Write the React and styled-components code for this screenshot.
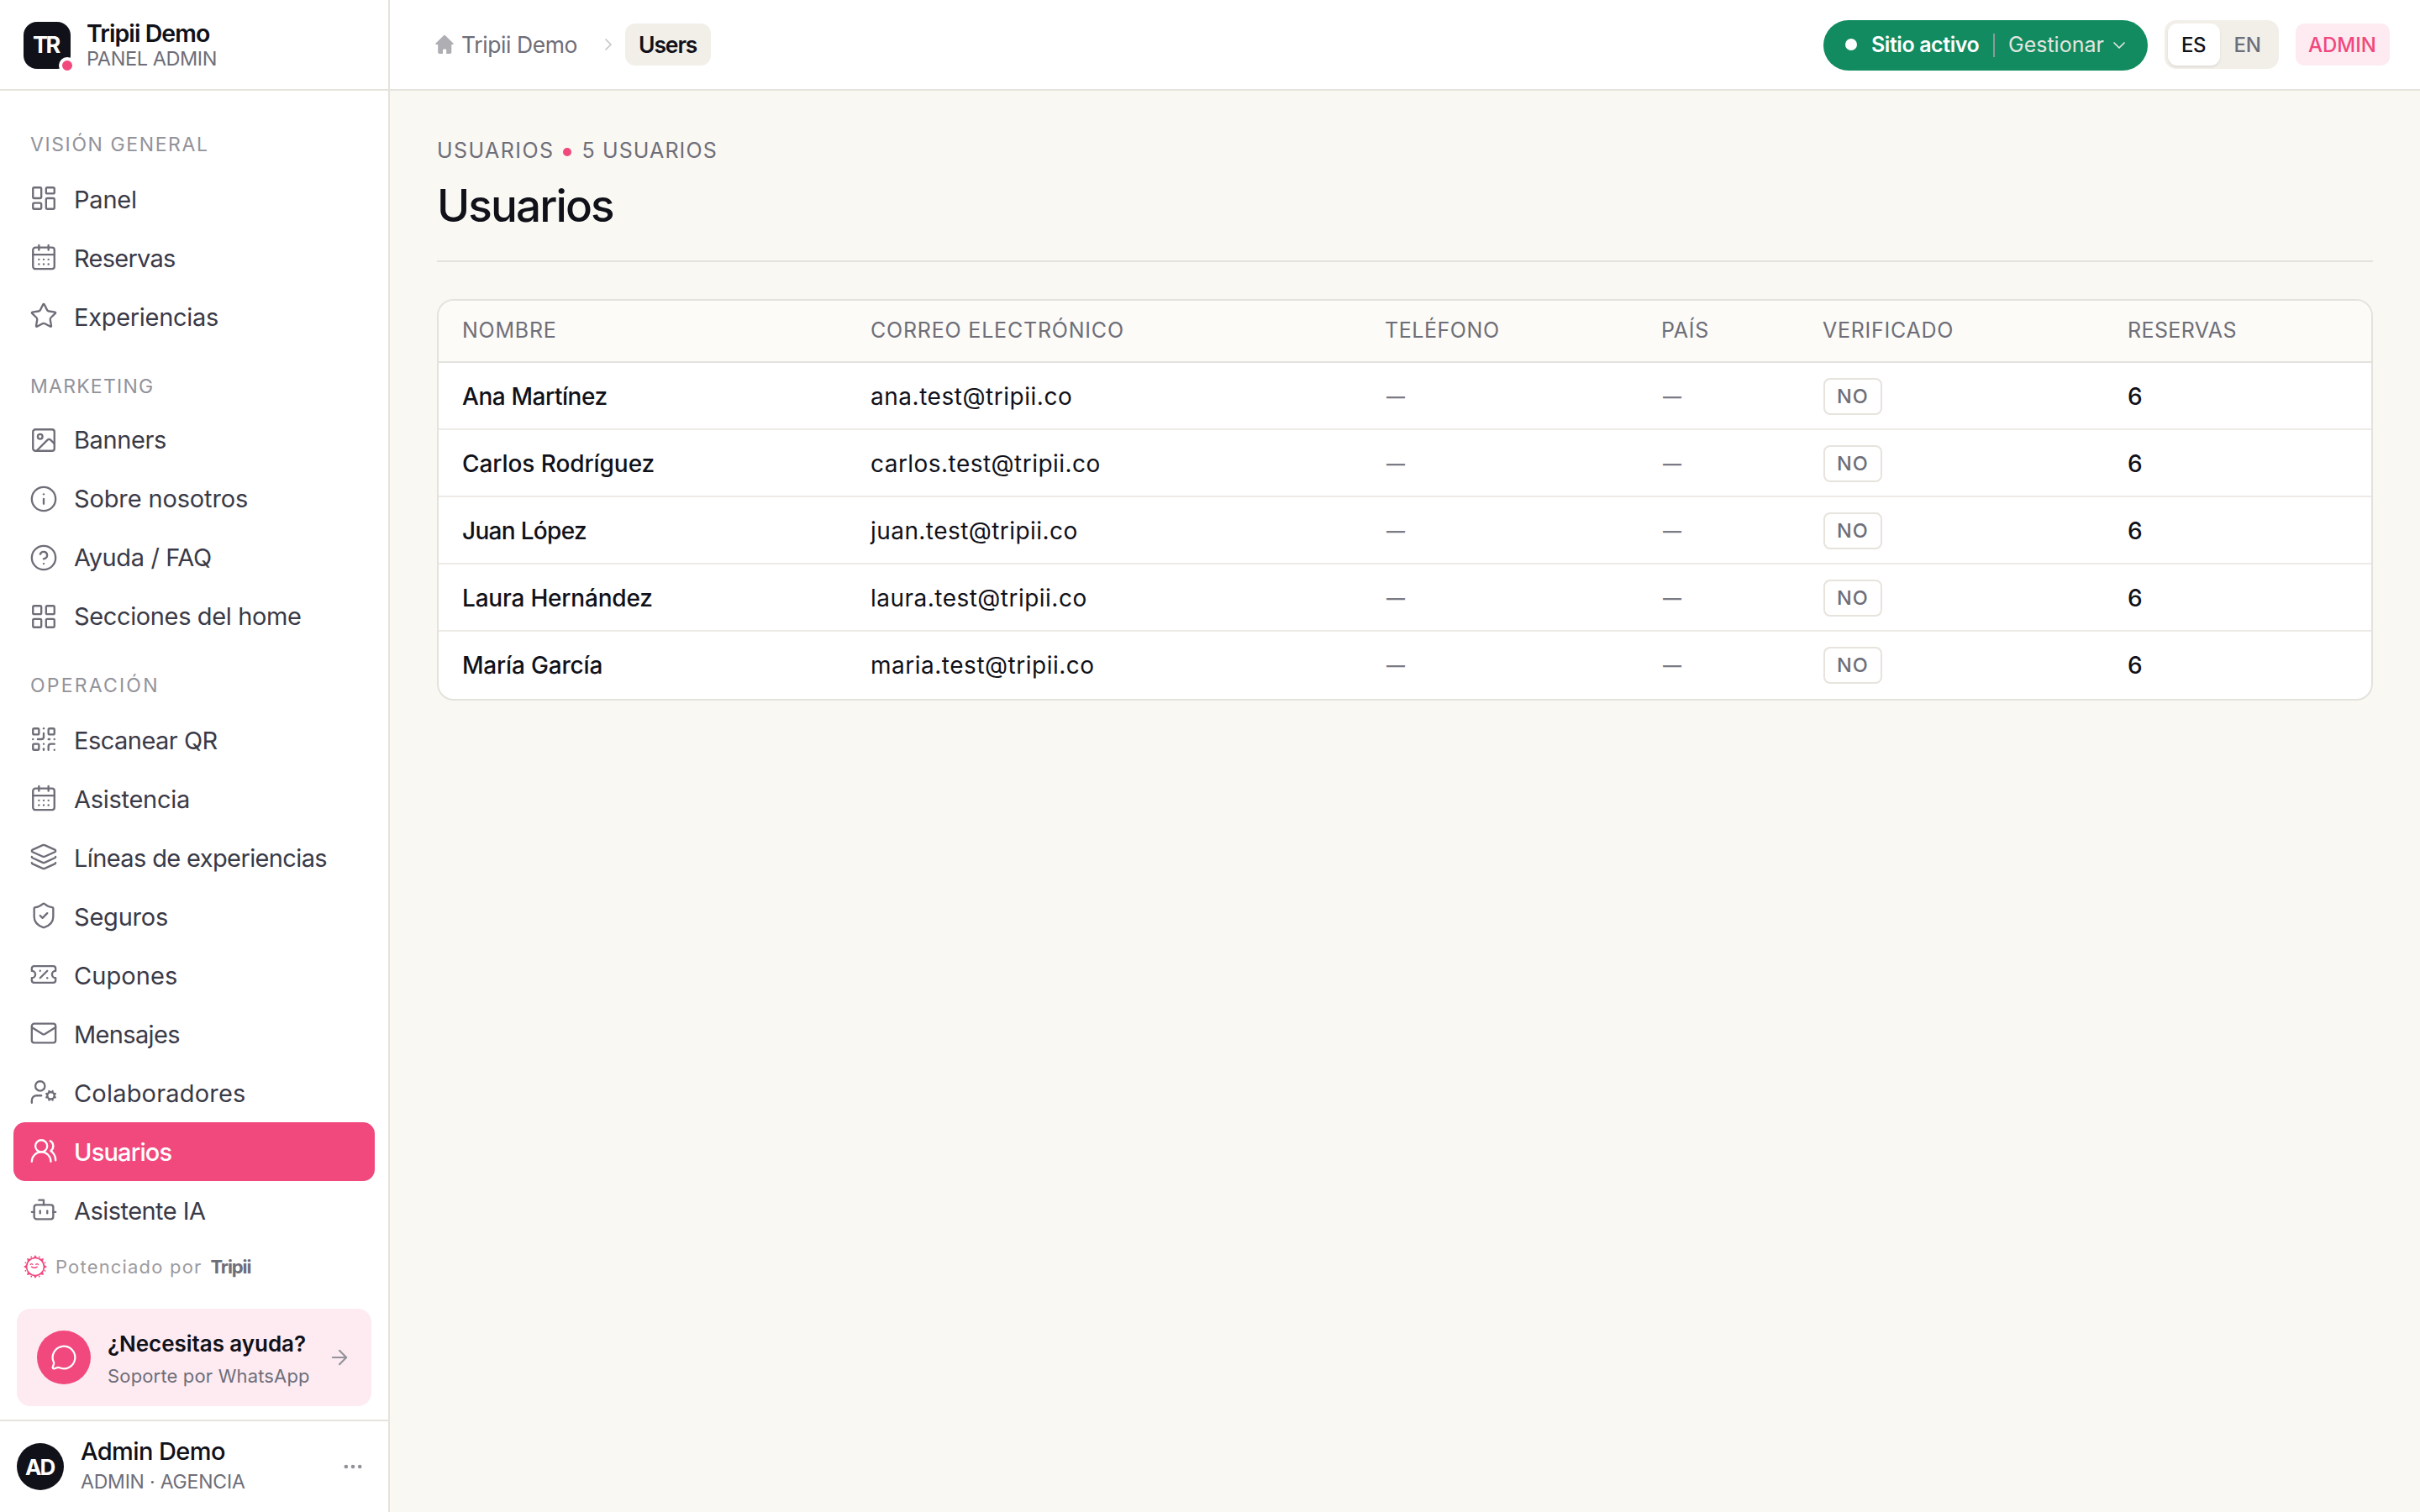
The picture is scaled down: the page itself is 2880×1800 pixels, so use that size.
import React, { useState } from "react";
import styled, { createGlobalStyle } from "styled-components";
import {
  ArrowRight,
  Bot,
  CalendarDays,
  ChevronDown,
  ChevronRight,
  CircleHelp,
  Ellipsis,
  Image,
  Info,
  Layers,
  LayoutDashboard,
  LayoutGrid,
  Mail,
  MessageCircle,
  QrCode,
  ShieldCheck,
  Star,
  TicketPercent,
  UserCog,
  UsersRound,
} from "lucide-react";

const groups = [
  {
    title: "VISIÓN GENERAL",
    track: 1.6,
    gap: 17,
    lift: 2,
    textLift: 1,
    items: [
      { label: "Panel", icon: LayoutDashboard, track: -0.21 },
      { label: "Reservas", icon: CalendarDays, track: -0.74 },
      { label: "Experiencias", icon: Star, track: -0.29 },
    ],
  },
  {
    title: "MARKETING",
    track: 1.24,
    gap: 15,
    lift: 0,
    textLift: 1,
    items: [
      { label: "Banners", icon: Image, track: -0.39 },
      { label: "Sobre nosotros", icon: Info, track: -0.14 },
      { label: "Ayuda / FAQ", icon: CircleHelp, track: -0.38 },
      { label: "Secciones del home", icon: LayoutGrid, track: -0.37 },
    ],
  },
  {
    title: "OPERACIÓN",
    track: 2.2,
    gap: 16,
    lift: 1,
    textLift: 0,
    items: [
      { label: "Escanear QR", icon: QrCode, track: -0.52 },
      { label: "Asistencia", icon: CalendarDays, track: -0.28 },
      { label: "Líneas de experiencias", icon: Layers, track: -0.62 },
      { label: "Seguros", icon: ShieldCheck, track: -0.21 },
      { label: "Cupones", icon: TicketPercent, track: 0.08 },
      { label: "Mensajes", icon: Mail, track: -0.66 },
      { label: "Colaboradores", icon: UserCog, track: 0.19 },
      { label: "Usuarios", icon: UsersRound, track: -0.84 },
      { label: "Asistente IA", icon: Bot, track: -0.54 },
    ],
  },
];

const columns = [
  { label: "NOMBRE", track: 0.75 },
  { label: "CORREO ELECTRÓNICO", track: 0.8 },
  { label: "TELÉFONO", track: 0.55 },
  { label: "PAÍS", track: 0.7 },
  { label: "VERIFICADO", track: 0.75 },
  { label: "RESERVAS", track: 0.4 },
];

const users = [
  { name: "Ana Martínez", track: -0.42, email: "ana.test@tripii.co", emailTrack: 0.53, bookings: 6 },
  { name: "Carlos Rodríguez", track: -0.07, email: "carlos.test@tripii.co", emailTrack: 0.46, bookings: 6 },
  { name: "Juan López", track: -0.69, email: "juan.test@tripii.co", emailTrack: 0.44, bookings: 6 },
  { name: "Laura Hernández", track: -0.2, email: "laura.test@tripii.co", emailTrack: 0.48, bookings: 6 },
  { name: "María García", track: -0.18, email: "maria.test@tripii.co", emailTrack: 0.51, bookings: 6 },
];

const HomeIcon = () => (
  <svg width="24" height="24" viewBox="0 0 24 24" fill="#aeaeb3">
    <path d="M11 1.2a1.4 1.4 0 0 1 2 0l9.4 9.4c.6.6.2 1.5-.6 1.5h-1.5v9.1a1.8 1.8 0 0 1-1.8 1.8h-4.3v-4.4a1 1 0 0 0-1-1H11a1 1 0 0 0-1 1V23H6a1.8 1.8 0 0 1-1.8-1.8v-9.1H2.2c-.8 0-1.2-.9-.6-1.5z" />
  </svg>
);

const SunIcon = () => (
  <svg width="28" height="28" viewBox="0 0 28 28" fill="none">
    <circle cx="14" cy="14" r="10.4" stroke="#f1487d" strokeWidth="1.5" />
    {[0, 45, 90, 135, 180, 225, 270, 315].map((a) => (
      <g key={a} transform={`rotate(${a} 14 14)`} fill="#f1487d">
        <path d="M11.4 4 14 0l2.6 4z" />
        <circle cx="14" cy="1.5" r="0.9" transform="rotate(22.5 14 14)" />
      </g>
    ))}
    <path
      d="M8.2 11.4q1.3-1.5 2.6-.2M14.8 11.2q1.3-1.3 2.8.2M9.6 14.2q3.4 2.2 6.6 0"
      stroke="#f1487d"
      strokeWidth="1.4"
      strokeLinecap="round"
    />
  </svg>
);

const App = () => {
  const [active, setActive] = useState("Usuarios");
  const [lang, setLang] = useState("ES");

  return (
    <>
      <GlobalStyle />
      <Layout>
        <Sidebar>
          <Brand>
            <Logo>
              TR
              <LogoDot />
            </Logo>
            <BrandText>
              <BrandName>Tripii Demo</BrandName>
              <BrandRole>PANEL ADMIN</BrandRole>
            </BrandText>
          </Brand>
          <Nav>
            {groups.map((group) => (
              <NavGroup key={group.title}>
                <NavTitle $track={group.track} $gap={group.gap}>
                  {group.title}
                </NavTitle>
                {group.items.map(({ label, icon: Icon, track }) => (
                  <NavItem
                    key={label}
                    $active={label === active}
                    $lift={group.lift}
                    $textLift={group.textLift}
                    $track={track}
                    onClick={() => setActive(label)}
                  >
                    <Icon size={34} strokeWidth={1.65} />
                    <span>{label}</span>
                  </NavItem>
                ))}
              </NavGroup>
            ))}
          </Nav>
          <Powered>
            <SunIcon />
            <span>Potenciado por</span>
            <b>Tripii</b>
          </Powered>
          <HelpCard>
            <HelpBubble>
              <MessageCircle size={32} strokeWidth={1.7} />
            </HelpBubble>
            <HelpText>
              <HelpTitle>¿Necesitas ayuda?</HelpTitle>
              <HelpSub>Soporte por WhatsApp</HelpSub>
            </HelpText>
            <ArrowRight size={28} strokeWidth={1.8} />
          </HelpCard>
          <Account>
            <Avatar>AD</Avatar>
            <AccountText>
              <AccountName>Admin Demo</AccountName>
              <AccountRole>ADMIN · AGENCIA</AccountRole>
            </AccountText>
            <Ellipsis size={28} strokeWidth={2} />
          </Account>
        </Sidebar>
        <Content>
          <Topbar>
            <Crumbs>
              <HomeIcon />
              <Crumb>Tripii Demo</Crumb>
              <ChevronRight size={24} strokeWidth={1.7} />
              <CurrentCrumb>Users</CurrentCrumb>
            </Crumbs>
            <Actions>
              <SiteStatus>
                <StatusDot />
                <StatusText>Sitio activo</StatusText>
                <StatusDivider />
                <StatusLink>Gestionar</StatusLink>
                <ChevronDown size={24} strokeWidth={1.7} />
              </SiteStatus>
              <LangSwitch>
                <LangButton $on={lang === "ES"} $width={62} onClick={() => setLang("ES")}>
                  ES
                </LangButton>
                <LangButton $on={lang === "EN"} $width={66} onClick={() => setLang("EN")}>
                  EN
                </LangButton>
              </LangSwitch>
              <RoleBadge>ADMIN</RoleBadge>
            </Actions>
          </Topbar>
          <Main>
            <PageHead>
              <Eyebrow>
                <EyebrowText $track={1.45}>USUARIOS</EyebrowText>
                <EyebrowDot />
                <EyebrowText $track={1.1}>5 USUARIOS</EyebrowText>
              </Eyebrow>
              <Title>Usuarios</Title>
            </PageHead>
            <Table>
              <HeadRow>
                {columns.map((col) => (
                  <HeadCell key={col.label} $track={col.track}>
                    {col.label}
                  </HeadCell>
                ))}
              </HeadRow>
              {users.map((user) => (
                <Row key={user.email}>
                  <NameCell $track={user.track}>{user.name}</NameCell>
                  <Cell $track={user.emailTrack}>{user.email}</Cell>
                  <EmptyCell>—</EmptyCell>
                  <EmptyCell>—</EmptyCell>
                  <BadgeCell>
                    <Verified>NO</Verified>
                  </BadgeCell>
                  <NameCell>{user.bookings}</NameCell>
                </Row>
              ))}
            </Table>
          </Main>
        </Content>
      </Layout>
    </>
  );
};

export default App;

const GlobalStyle = createGlobalStyle`
  * {
    box-sizing: border-box;
  }

  body {
    margin: 0;
    background: #faf8f3;
    color: #101119;
    font-family: Inter, "Liberation Sans", sans-serif;
  }

  button {
    border: none;
    background: none;
    font-family: inherit;
    cursor: pointer;
  }

  svg {
    flex-shrink: 0;
  }
`;

const Layout = styled.div`
  display: flex;
  height: 1800px;
`;

const Sidebar = styled.aside`
  display: flex;
  flex-direction: column;
  flex-shrink: 0;
  width: 464px;
  background: #fff;
  border-right: 2px solid #e6e3dd;
  white-space: nowrap;
`;

const Brand = styled.div`
  display: flex;
  align-items: center;
  gap: 20px;
  height: 108px;
  flex-shrink: 0;
  padding: 2px 28px 0;
  border-bottom: 2px solid #e6e3dd;
`;

const Logo = styled.div`
  position: relative;
  width: 56px;
  height: 56px;
  border-radius: 16px;
  background: #101119;
  color: #fff;
  font-size: 27px;
  font-weight: 700;
  line-height: 56px;
  letter-spacing: -2.4px;
  padding-left: 11px;
`;

const LogoDot = styled.i`
  position: absolute;
  right: -6px;
  bottom: -6px;
  width: 20px;
  height: 20px;
  border: 4px solid #fff;
  border-radius: 50%;
  background: #f1487d;
`;

const BrandText = styled.div`
  margin-left: -1px;
  padding-top: 2px;
  line-height: 30px;
`;

const BrandName = styled.div`
  font-size: 28.5px;
  font-weight: 600;
  letter-spacing: -0.92px;
`;

const BrandRole = styled.div`
  font-size: 23.5px;
  letter-spacing: -0.42px;
  color: #6e6e79;
`;

const Nav = styled.nav`
  padding: 17px 16px 0;
`;

const NavGroup = styled.div`
  padding-top: 33px;
`;

const NavTitle = styled.div`
  margin-bottom: ${({ $gap }) => $gap}px;
  padding-left: 20px;
  font-size: 23px;
  line-height: 28px;
  letter-spacing: ${({ $track }) => $track}px;
  color: #92929a;
`;

const NavItem = styled.button`
  display: flex;
  align-items: center;
  gap: 19px;
  width: 430px;
  height: 70px;
  padding: 0 19px;
  border-radius: 14px;
  background: ${({ $active }) => ($active ? "#f1487d" : "transparent")};
  color: ${({ $active }) => ($active ? "#fff" : "#3a3a47")};
  font-size: 29px;
  font-weight: ${({ $active }) => ($active ? 500 : 400)};
  letter-spacing: ${({ $track }) => $track}px;

  svg {
    margin-bottom: ${({ $lift }) => $lift * 2}px;
    color: ${({ $active }) => ($active ? "#fff" : "#6e6e79")};
  }

  span {
    margin-bottom: ${({ $textLift }) => $textLift * 2}px;
  }
`;

const Powered = styled.div`
  display: flex;
  align-items: center;
  height: 28px;
  margin-top: auto;
  margin-bottom: 36px;
  padding-left: 28px;
  font-size: 22px;
  letter-spacing: 1.18px;
  color: #9b9ba1;

  span {
    margin: 0 10px 0 10px;
  }

  b {
    font-weight: 700;
    letter-spacing: -1.07px;
    color: #6e6e79;
  }
`;

const HelpCard = styled.div`
  display: flex;
  align-items: center;
  height: 116px;
  margin: 0 20px 16px;
  padding: 0 24px;
  border-radius: 16px;
  background: #fdebf1;
  color: #92929a;
`;

const HelpBubble = styled.div`
  display: flex;
  align-items: center;
  justify-content: center;
  width: 64px;
  height: 64px;
  border-radius: 50%;
  background: #f1487d;
  color: #fff;
`;

const HelpText = styled.div`
  flex: 1;
  padding: 6px 0 0 20px;
  line-height: 38px;
`;

const HelpTitle = styled.div`
  font-size: 26px;
  font-weight: 600;
  letter-spacing: -0.05px;
  color: #101119;
`;

const HelpSub = styled.div`
  font-size: 22px;
  letter-spacing: 0.16px;
  color: #6e6e79;
`;

const Account = styled.div`
  display: flex;
  align-items: center;
  height: 110px;
  padding: 0 28px 0 20px;
  border-top: 2px solid #e6e3dd;
  color: #92929a;
`;

const Avatar = styled.div`
  width: 56px;
  height: 56px;
  border-radius: 50%;
  background: #101119;
  color: #fff;
  font-size: 26px;
  font-weight: 700;
  line-height: 57px;
  letter-spacing: -2px;
  padding-left: 10px;
`;

const AccountText = styled.div`
  flex: 1;
  padding-left: 20px;
  line-height: 36px;
`;

const AccountName = styled.div`
  font-size: 29px;
  font-weight: 500;
  letter-spacing: -0.58px;
  color: #101119;
`;

const AccountRole = styled.div`
  font-size: 23px;
  letter-spacing: -0.2px;
  color: #6e6e79;
`;

const Content = styled.div`
  flex: 1;
  white-space: nowrap;
`;

const Topbar = styled.header`
  display: flex;
  align-items: center;
  justify-content: space-between;
  height: 108px;
  padding: 0 36px 0 53px;
  background: #fff;
  border-bottom: 2px solid #e6e3dd;
`;

const Crumbs = styled.div`
  display: flex;
  align-items: center;
  color: #c9c5c6;
`;

const Crumb = styled.span`
  width: 163px;
  margin-left: 8px;
  font-size: 26.5px;
  letter-spacing: -0.42px;
  color: #6e6e79;
`;

const CurrentCrumb = styled.span`
  width: 102px;
  height: 50px;
  margin-left: 8px;
  padding-left: 16px;
  border-radius: 12px;
  background: #f2efe9;
  color: #101119;
  font-size: 26.5px;
  font-weight: 600;
  line-height: 50px;
  letter-spacing: -1.1px;
`;

const Actions = styled.div`
  display: flex;
  align-items: center;
  gap: 20px;
`;

const SiteStatus = styled.div`
  display: flex;
  align-items: center;
  width: 386px;
  height: 60px;
  margin-top: 2px;
  padding: 0 22px 2px 26px;
  border-radius: 30px;
  background: #118b5f;
  color: #e3e6e0;
  font-size: 25px;

  svg {
    margin-top: 2px;
  }
`;

const StatusDot = styled.i`
  width: 14px;
  height: 14px;
  border-radius: 50%;
  background: #fff;
`;

const StatusText = styled.span`
  width: 145px;
  margin-left: 17px;
  font-weight: 600;
  letter-spacing: -0.42px;
  color: #fff;
`;

const StatusDivider = styled.i`
  width: 2px;
  height: 28px;
  margin-top: 2px;
  background: #8d9a9b;
`;

const StatusLink = styled.span`
  width: 120px;
  margin-left: 16px;
`;

const LangSwitch = styled.div`
  display: flex;
  padding: 4px;
  border-radius: 14px;
  background: #f2efe9;
`;

const LangButton = styled.button`
  width: ${({ $width }) => $width}px;
  height: 50px;
  padding: 0 1px 0 0;
  border-radius: 11px;
  background: ${({ $on }) => ($on ? "#fff" : "transparent")};
  box-shadow: ${({ $on }) => ($on ? "0 2px 3px rgba(16, 17, 25, 0.08)" : "none")};
  color: ${({ $on }) => ($on ? "#101119" : "#6e6e79")};
  font-size: 24px;
  font-weight: 500;
  letter-spacing: -0.4px;
`;

const RoleBadge = styled.div`
  width: 112px;
  height: 50px;
  padding-right: 1px;
  border-radius: 10px;
  background: #fdebf1;
  color: #f1487d;
  font-size: 24px;
  font-weight: 500;
  line-height: 51px;
  letter-spacing: 0;
  text-align: center;
`;

const Main = styled.main`
  padding: 56px 56px 0;
`;

const PageHead = styled.div`
  padding-bottom: 33px;
  border-bottom: 2px solid #e4e2dc;
`;

const Eyebrow = styled.div`
  display: flex;
  align-items: center;
  height: 30px;
  color: #6e6e79;
  font-size: 25px;
`;

const EyebrowText = styled.span`
  letter-spacing: ${({ $track }) => $track}px;
`;

const EyebrowDot = styled.i`
  width: 10px;
  height: 10px;
  margin: 4px 13px 0 10px;
  border-radius: 50%;
  background: #f1487d;
`;

const Title = styled.h1`
  margin: 19px 0 0;
  font-size: 53px;
  font-weight: 500;
  line-height: 64px;
  letter-spacing: -1.9px;
`;

const Table = styled.div`
  margin-top: 44px;
  overflow: hidden;
  border: 2px solid #e4e2dc;
  border-radius: 20px;
  background: #fff;
`;

const Row = styled.div`
  display: grid;
  grid-template-columns: 486fr 612fr 329fr 192fr 363fr 318fr;
  align-items: center;
  height: 80px;
  border-bottom: 2px solid #eeebe6;

  &:last-child {
    border-bottom-color: transparent;
  }
`;

const HeadRow = styled(Row)`
  height: 74px;
  padding-bottom: 2px;
  background: #fcfbf7;
  border-bottom-color: #e4e2dc;
`;

const Cell = styled.div`
  padding: 2px 0 0 28px;
  font-size: 28px;
  letter-spacing: ${({ $track = 0 }) => $track}px;
`;

const HeadCell = styled(Cell)`
  padding-top: 0;
  font-size: 25px;
  color: #6e6e79;
`;

const NameCell = styled(Cell)`
  font-weight: 500;
`;

const EmptyCell = styled(Cell)`
  padding-left: 30px;
  font-size: 22px;
  font-weight: 600;
  color: #7a7a84;
`;

const BadgeCell = styled(Cell)`
  padding: 2px 0 0 29px;
`;

const Verified = styled.span`
  display: block;
  width: 70px;
  height: 44px;
  border: 2px solid #e7e3dd;
  border-radius: 8px;
  color: #6e6e79;
  font-size: 23.5px;
  font-weight: 500;
  line-height: 40px;
  letter-spacing: 1px;
  text-align: center;
`;
